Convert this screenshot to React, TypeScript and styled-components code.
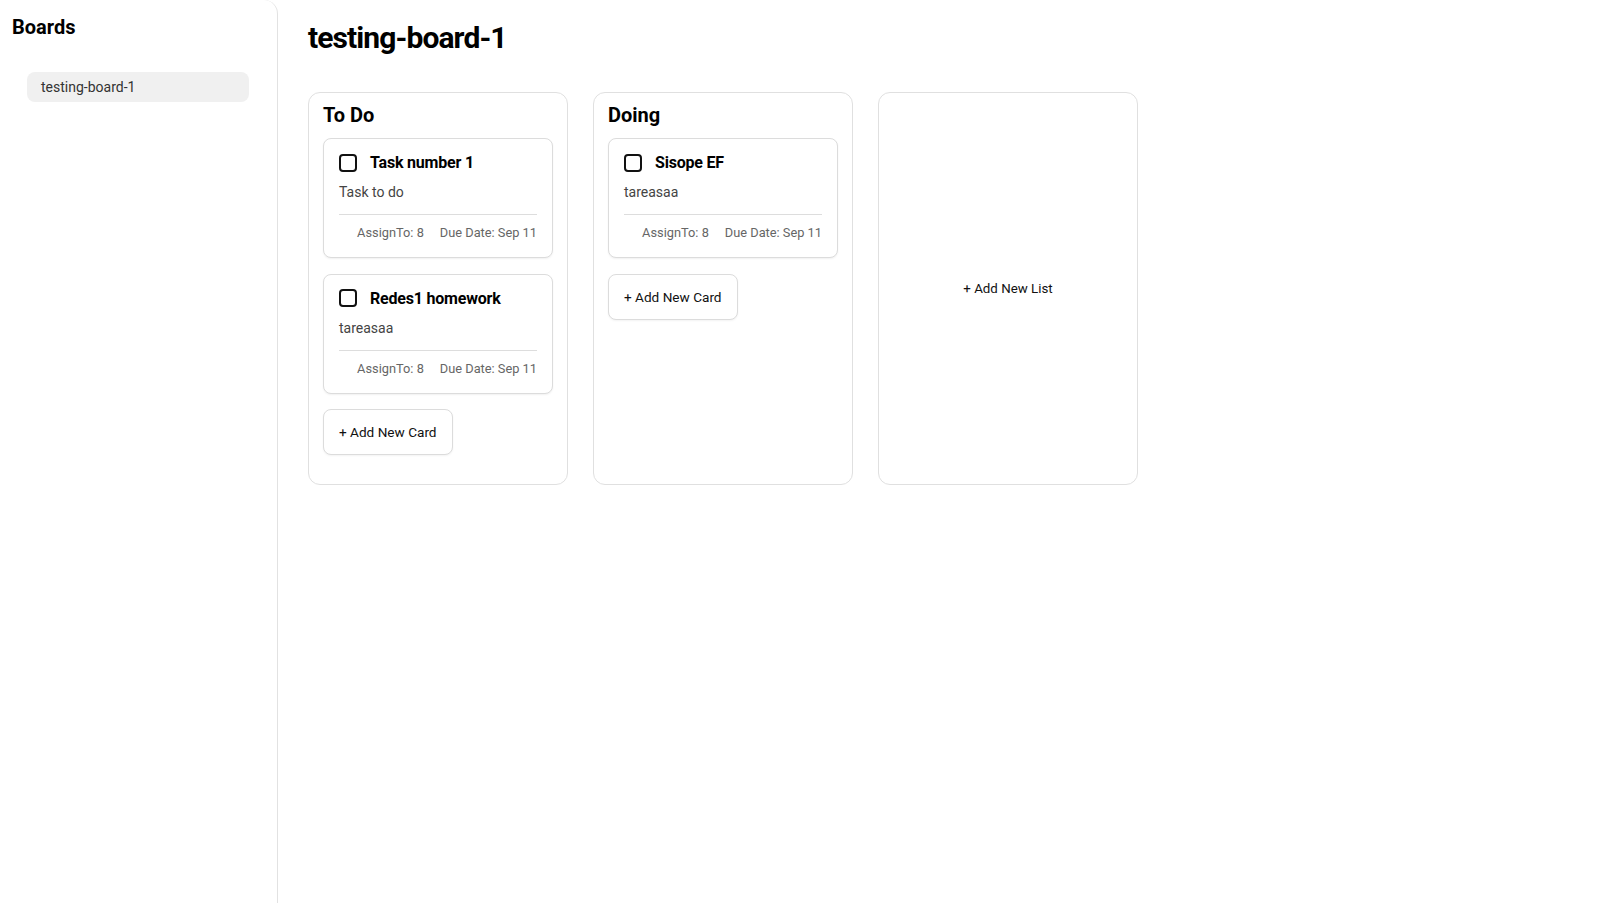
import React from "react";
import styled, { createGlobalStyle } from "styled-components";

const GlobalStyle = createGlobalStyle`
  html, body {
    margin: 0;
    padding: 0;
    background: #ffffff;
    font-family: Roboto, "Liberation Sans", Arial, sans-serif;
    color: #111111;
  }
  * { box-sizing: border-box; }
`;

const Layout = styled.div`
  display: flex;
  min-height: 100vh;
`;

const Sidebar = styled.aside`
  width: 278px;
  flex-shrink: 0;
  min-height: 100vh;
  border-right: 1px solid #e2e2e2;
  border-top-right-radius: 14px;
  padding: 15px 12px;
`;

const SidebarTitle = styled.h2`
  margin: 0;
  font-size: 20px;
  font-weight: 700;
  color: #000;
`;

const BoardList = styled.ul`
  list-style: none;
  margin: 33px 0 0;
  padding: 0 16px 0 15px;
`;

const BoardItem = styled.li<{ $active?: boolean }>`
  height: 30px;
  display: flex;
  align-items: center;
  padding: 0 14px;
  border-radius: 8px;
  background: ${(p) => (p.$active ? "#f0f0f0" : "transparent")};
  font-size: 14px;
  color: #333;
`;

const Main = styled.main`
  flex: 1;
  padding: 17.5px 30px 16px;
`;

const BoardTitle = styled.h1`
  margin: 0;
  font-size: 30px;
  font-weight: 700;
  letter-spacing: -0.9px;
  color: #000;
  line-height: 40px;
`;

const Columns = styled.div`
  display: flex;
  align-items: stretch;
  gap: 25px;
  margin-top: 34.5px;
`;

const Column = styled.section<{ $center?: boolean }>`
  width: 260px;
  border: 1px solid #e0e0e0;
  border-radius: 12px;
  padding: ${(p) => (p.$center ? "14px" : "10px 14px 29px")};
  display: flex;
  flex-direction: column;
  align-items: ${(p) => (p.$center ? "center" : "flex-start")};
  justify-content: ${(p) => (p.$center ? "center" : "flex-start")};
  background: #fff;
`;

const ColumnTitle = styled.h3`
  margin: 0 0 11px;
  font-size: 20px;
  line-height: 24px;
  font-weight: 700;
  color: #000;
`;

const CardStack = styled.div`
  display: flex;
  flex-direction: column;
  gap: 15.5px;
  width: 100%;
  align-items: flex-start;
`;

const Card = styled.article`
  width: 230px;
  border: 1px solid #dcdcdc;
  border-radius: 8px;
  padding: 14px 15px 17px;
  background: #fff;
  box-shadow: 0 1px 2px rgba(0, 0, 0, 0.06);
`;

const CardHeader = styled.div`
  display: flex;
  align-items: center;
  gap: 13px;
`;

const CheckBox = styled.span`
  width: 18px;
  height: 18px;
  border: 2px solid #111;
  border-radius: 4px;
  flex-shrink: 0;
`;

const CardTitle = styled.h4`
  margin: 0;
  font-size: 16px;
  font-weight: 700;
  letter-spacing: -0.2px;
  color: #000;
`;

const CardDesc = styled.p`
  margin: 12px 0 0;
  font-size: 14px;
  color: #444;
`;

const CardFooter = styled.div`
  margin-top: 14px;
  border-top: 1px solid #dddddd;
  padding-top: 10px;
  display: flex;
  justify-content: flex-end;
  gap: 16px;
  font-size: 12.8px;
  color: #666;
`;

const AddButton = styled.button`
  border: 1px solid #dcdcdc;
  border-radius: 8px;
  background: #fff;
  padding: 14px 15px;
  font-family: inherit;
  font-size: 13.6px;
  line-height: 16px;
  color: #111;
  cursor: pointer;
  box-shadow: 0 1px 2px rgba(0, 0, 0, 0.05);
`;

const AddListLabel = styled.span`
  font-size: 13.333px;
  color: #111;
`;

type Task = { title: string; desc: string; assign: number; due: string };

const lists: { name: string; tasks: Task[] }[] = [
  {
    name: "To Do",
    tasks: [
      { title: "Task number 1", desc: "Task to do", assign: 8, due: "Sep 11" },
      { title: "Redes1 homework", desc: "tareasaa", assign: 8, due: "Sep 11" },
    ],
  },
  {
    name: "Doing",
    tasks: [{ title: "Sisope EF", desc: "tareasaa", assign: 8, due: "Sep 11" }],
  },
];

export default function App() {
  return (
    <>
      <GlobalStyle />
      <Layout>
        <Sidebar>
          <SidebarTitle>Boards</SidebarTitle>
          <BoardList>
            <BoardItem $active>testing-board-1</BoardItem>
          </BoardList>
        </Sidebar>
        <Main>
          <BoardTitle>testing-board-1</BoardTitle>
          <Columns>
            {lists.map((l) => (
              <Column key={l.name}>
                <ColumnTitle>{l.name}</ColumnTitle>
                <CardStack>
                  {l.tasks.map((t) => (
                    <Card key={t.title}>
                      <CardHeader>
                        <CheckBox />
                        <CardTitle>{t.title}</CardTitle>
                      </CardHeader>
                      <CardDesc>{t.desc}</CardDesc>
                      <CardFooter>
                        <span>AssignTo: {t.assign}</span>
                        <span>Due Date: {t.due}</span>
                      </CardFooter>
                    </Card>
                  ))}
                  <AddButton>+ Add New Card</AddButton>
                </CardStack>
              </Column>
            ))}
            <Column $center>
              <AddListLabel>+ Add New List</AddListLabel>
            </Column>
          </Columns>
        </Main>
      </Layout>
    </>
  );
}
